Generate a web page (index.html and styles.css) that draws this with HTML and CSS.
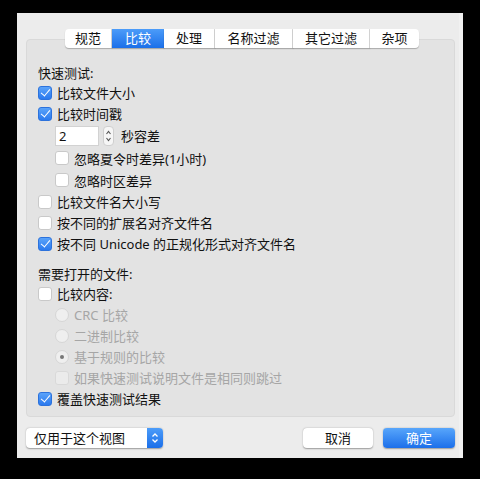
FILE: index.html
```html
<!DOCTYPE html>
<html lang="zh-CN">
<head>
    <meta charset="UTF-8">
    <title>比较</title>
    <link rel="stylesheet" href="styles.css">
</head>
<body>
    <div class="dialog">
        <div class="tabs">
            <div class="tab w47">规范</div>
            <div class="tab w52 selected">比较</div>
            <div class="tab w51">处理</div>
            <div class="tab w78">名称过滤</div>
            <div class="tab w77">其它过滤</div>
            <div class="tab w49">杂项</div>
        </div>
        <div class="group">
            <div class="heading">快速测试:</div>
            <div class="row"><span class="box checked"></span>比较文件大小</div>
            <div class="row"><span class="box checked"></span>比较时间戳</div>
            <div class="row spin-row indent">
                <div class="field">2</div>
                <div class="stepper">
                    <svg width="11" height="20" viewBox="0 0 11 20"><path d="M3.5 8 L5.5 5.5 L7.5 8 M3.5 12 L5.5 14.5 L7.5 12" fill="none" stroke="#555" stroke-width="1.1"/></svg>
                </div>
                <span class="spin-label">秒容差</span>
            </div>
            <div class="row tall indent"><span class="box"></span>忽略夏令时差异(1小时)</div>
            <div class="row tall indent"><span class="box"></span>忽略时区差异</div>
            <div class="row"><span class="box"></span>比较文件名大小写</div>
            <div class="row"><span class="box"></span>按不同的扩展名对齐文件名</div>
            <div class="row"><span class="box checked"></span>按不同 Unicode 的正规化形式对齐文件名</div>
            <div class="heading second">需要打开的文件:</div>
            <div class="row"><span class="box"></span>比较内容:</div>
            <div class="row indent disabled"><span class="radio"></span>CRC 比较</div>
            <div class="row indent disabled"><span class="radio"></span>二进制比较</div>
            <div class="row indent disabled"><span class="radio on"></span>基于规则的比较</div>
            <div class="row indent disabled"><span class="box"></span>如果快速测试说明文件是相同则跳过</div>
            <div class="row"><span class="box checked"></span>覆盖快速测试结果</div>
        </div>
        <div class="footer">
            <div class="popup">
                <span class="popup-text">仅用于这个视图</span>
                <span class="popup-arrows">
                    <svg width="16" height="20" viewBox="0 0 16 20"><path d="M5.5 8.5 L8 6 L10.5 8.5 M5.5 11.5 L8 14 L10.5 11.5" fill="none" stroke="#fff" stroke-width="1.3"/></svg>
                </span>
            </div>
            <div class="spacer"></div>
            <div class="button">取消</div>
            <div class="button primary">确定</div>
        </div>
    </div>
</body>
</html>
```

FILE: styles.css
```css
body {
    margin: 0;
    background: #000;
    height: 479px;
    overflow: hidden;
    font-family: "Noto Sans", "Noto Sans CJK SC", sans-serif;
    font-size: 13px;
    color: #111;
}

.dialog {
    margin: 13px 0 0 17px;
    width: 446px;
    height: 445px;
    background: #ececec;
    box-sizing: border-box;
    padding: 16px 8px 0 9px;
    box-shadow: inset -4px 0 #f1f1f1;
}

.tabs {
    display: flex;
    margin-left: 39px;
    height: 19px;
    position: relative;
    z-index: 1;
    margin-bottom: -9px;
}

.tab {
    display: flex;
    align-items: center;
    justify-content: center;
    background: #fff;
    border-right: 1px solid #d8d8d8;
    box-shadow: 0 1px 1px rgba(0, 0, 0, 0.25);
    box-sizing: border-box;
    line-height: 1;
}

.tab:first-child { border-radius: 4px 0 0 4px; }
.tab:last-child { border-radius: 0 4px 4px 0; border-right: none; }

.tab.selected {
    background: linear-gradient(#4c9cf9, #1b6fe9);
    color: #fff;
    border-right: none;
}

.w47 { width: 47px; }
.w52 { width: 52px; }
.w51 { width: 51px; }
.w78 { width: 78px; }
.w77 { width: 77px; }
.w49 { width: 49px; }

.group {
    background: #e3e3e3;
    border: 1px solid #d9d9d9;
    border-radius: 4px;
    height: 378px;
    box-sizing: border-box;
    padding: 22px 0 0 11px;
}

.heading {
    height: 20px;
    display: flex;
    align-items: center;
}

.heading.second {
    margin-top: 9px;
}

.row {
    height: 21px;
    display: flex;
    align-items: center;
}

.row.tall { height: 22px; }
.row.indent { padding-left: 17px; }

.box {
    width: 14px;
    height: 14px;
    box-sizing: border-box;
    background: #fff;
    border: 1px solid #c9c9c9;
    border-radius: 3px;
    margin-right: 5px;
    flex-shrink: 0;
    position: relative;
}

.box.checked {
    background: linear-gradient(#5aa3fa, #2a79ee);
    border-color: #2c72dc;
}

.box.checked::after {
    content: "";
    position: absolute;
    left: 3.5px;
    top: 0.5px;
    width: 4px;
    height: 8px;
    border-right: 1.6px solid #fff;
    border-bottom: 1.6px solid #fff;
    transform: rotate(40deg);
}

.radio {
    width: 14px;
    height: 14px;
    box-sizing: border-box;
    border-radius: 50%;
    background: #efefef;
    border: 1px solid #d6d6d6;
    margin-right: 5px;
    flex-shrink: 0;
    position: relative;
}

.radio.on::after {
    content: "";
    position: absolute;
    left: 4px;
    top: 4px;
    width: 4px;
    height: 4px;
    border-radius: 50%;
    background: #777;
}

.disabled { color: #a6a6a6; }
.disabled .box { background: #ebebeb; border-color: #d9d9d9; }

.spin-row { height: 23px; padding-left: 15px; }

.field {
    width: 44px;
    height: 20px;
    background: #fff;
    border: 1px solid #d2d2d2;
    box-sizing: border-box;
    display: flex;
    align-items: center;
    padding-left: 3px;
}

.stepper {
    width: 11px;
    height: 20px;
    margin-left: 4px;
    background: #f6f6f6;
    border: 1px solid #cfcfcf;
    border-radius: 4px;
    box-sizing: border-box;
    display: flex;
    align-items: center;
    justify-content: center;
}

.stepper svg { flex-shrink: 0; }

.spin-label { margin-left: 7px; }

.footer {
    display: flex;
    align-items: center;
    margin-top: 10px;
    height: 21px;
}

.popup {
    display: flex;
    width: 137px;
    height: 20px;
    background: #fff;
    border-radius: 4px;
    box-shadow: 0 0.5px 1.5px rgba(0, 0, 0, 0.35);
}

.popup-text {
    flex: 1;
    display: flex;
    align-items: center;
    padding-left: 8px;
}

.popup-arrows {
    width: 16px;
    background: linear-gradient(#4c9cf9, #1b6fe9);
    border-radius: 0 4px 4px 0;
    display: flex;
}

.spacer { flex: 1; }

.button {
    width: 70px;
    height: 20px;
    background: #fff;
    border-radius: 4px;
    box-shadow: 0 0.5px 1.5px rgba(0, 0, 0, 0.35);
    display: flex;
    align-items: center;
    justify-content: center;
    margin-left: 10px;
}

.button.primary {
    width: 72px;
    background: linear-gradient(#58a6fb, #1c6fea);
    color: #fff;
}
```
